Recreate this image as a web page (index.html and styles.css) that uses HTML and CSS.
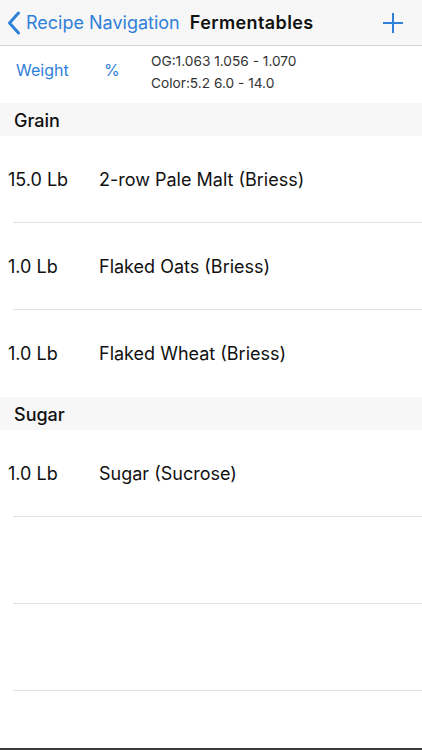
FILE: index.html
```html
<!DOCTYPE html>
<html>
<head>
    <title>Fermentables</title>
    <link rel="stylesheet" href="styles.css">
</head>
<body>

<div class="screen">
    <div class="navbar">
        <a class="back">
            <svg class="chevron" width="14" height="24" viewBox="0 0 14 24">
                <path d="M11.5 2 L2.5 12 L11.5 22" fill="none" stroke="#2f80d8" stroke-width="3" stroke-linecap="round" stroke-linejoin="round"/>
            </svg>
            <span>Recipe Navigation</span>
        </a>
        <span class="title">Fermentables</span>
        <svg class="plus" width="20" height="20" viewBox="0 0 20 20">
            <path d="M10 0 V20 M0 10 H20" stroke="#2f80d8" stroke-width="2"/>
        </svg>
    </div>

    <div class="summary">
        <span class="sort">Weight</span>
        <span class="sort pct">%</span>
        <div class="stats">
            <div>OG:1.063 1.056 - 1.070</div>
            <div>Color:5.2 6.0 - 14.0</div>
        </div>
    </div>

    <div class="section">Grain</div>
    <div class="row"><span class="amount">15.0 Lb</span><span class="name">2-row Pale Malt (Briess)</span></div>
    <div class="row"><span class="amount">1.0 Lb</span><span class="name">Flaked Oats (Briess)</span></div>
    <div class="row last"><span class="amount">1.0 Lb</span><span class="name">Flaked Wheat (Briess)</span></div>

    <div class="section">Sugar</div>
    <div class="row"><span class="amount">1.0 Lb</span><span class="name">Sugar (Sucrose)</span></div>
    <div class="row"></div>
    <div class="row"></div>
    <div class="filler"></div>
    <div class="tabedge"></div>
</div>

</body>
</html>
```

FILE: styles.css
```css
body {
    margin: 0;
    font-family: Inter, "Liberation Sans", sans-serif;
    color: #111;
    background-color: white;
}
.screen {
    width: 422px;
    height: 750px;
    display: flex;
    flex-direction: column;
    overflow: hidden;
}
.navbar {
    height: 45px;
    flex-shrink: 0;
    background-color: #f7f7f7;
    border-bottom: 1px solid #d4d4d4;
    display: flex;
    align-items: center;
    padding: 0 19px 0 7px;
    font-size: 18px;
}
.back {
    display: flex;
    align-items: center;
    gap: 5px;
    color: #2f80d8;
}
.title {
    font-weight: 600;
    letter-spacing: 0.4px;
    margin-left: 10px;
    color: #111;
}
.plus {
    margin-left: auto;
}
.summary {
    height: 57px;
    flex-shrink: 0;
    display: flex;
    align-items: center;
    padding: 0 0 6px 0;
    box-sizing: border-box;
}
.sort {
    color: #2f80d8;
    font-size: 16px;
    margin-left: 16px;
    margin-bottom: 3px;
    width: 72px;
}
.pct {
    width: 47px;
    margin-left: 16px;
}
.stats {
    font-size: 13.7px;
    color: #333;
    line-height: 22px;
}
.section {
    height: 33px;
    flex-shrink: 0;
    background-color: #f7f7f7;
    font-size: 18px;
    font-weight: 500;
    padding-left: 14px;
    line-height: 36px;
    box-sizing: border-box;
}
.row {
    height: 87px;
    flex-shrink: 0;
    display: flex;
    align-items: center;
    margin-left: 13px;
    border-bottom: 1px solid #e2e2e2;
    box-sizing: border-box;
    font-size: 18px;
}
.row.last {
    border-bottom: none;
}
.amount {
    margin-left: -5px;
    width: 91px;
}
.filler {
    flex: 1;
}
.tabedge {
    height: 2px;
    flex-shrink: 0;
    background-color: #3a3a3a;
}
```
